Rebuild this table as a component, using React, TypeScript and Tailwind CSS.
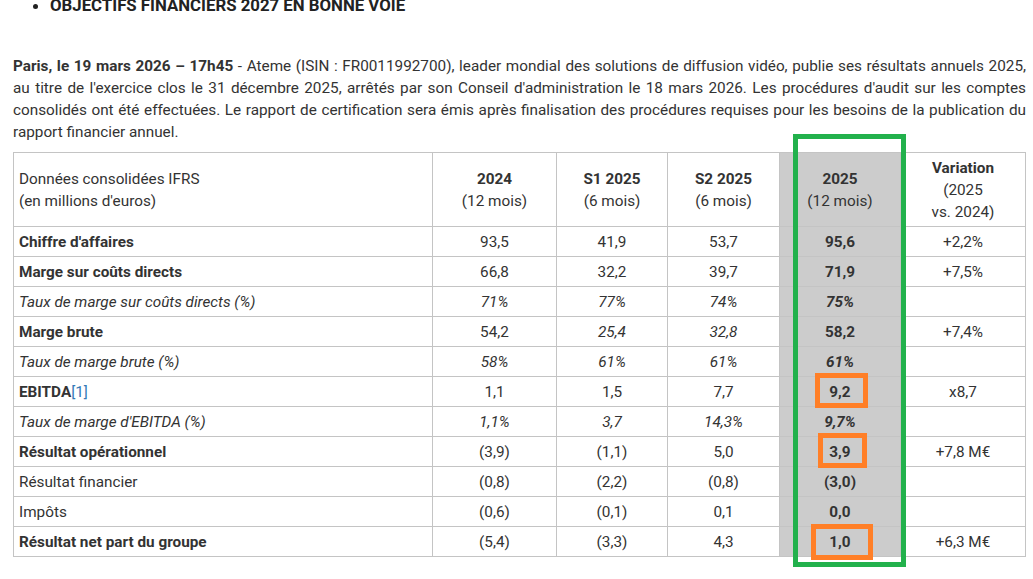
import React from "react";

type Cell = { v: string; i?: boolean };
type Row = {
  label: React.ReactNode;
  kind: "bold" | "italic" | "normal";
  vals: Cell[];
  v2025: Cell;
  variation: string;
};

const rows: Row[] = [
  { label: "Chiffre d'affaires", kind: "bold", vals: [{ v: "93,5" }, { v: "41,9" }, { v: "53,7" }], v2025: { v: "95,6" }, variation: "+2,2%" },
  { label: "Marge sur coûts directs", kind: "bold", vals: [{ v: "66,8" }, { v: "32,2" }, { v: "39,7" }], v2025: { v: "71,9" }, variation: "+7,5%" },
  { label: "Taux de marge sur coûts directs (%)", kind: "italic", vals: [{ v: "71%", i: true }, { v: "77%", i: true }, { v: "74%", i: true }], v2025: { v: "75%", i: true }, variation: "" },
  { label: "Marge brute", kind: "bold", vals: [{ v: "54,2" }, { v: "25,4", i: true }, { v: "32,8", i: true }], v2025: { v: "58,2" }, variation: "+7,4%" },
  { label: "Taux de marge brute (%)", kind: "italic", vals: [{ v: "58%", i: true }, { v: "61%", i: true }, { v: "61%", i: true }], v2025: { v: "61%", i: true }, variation: "" },
  {
    label: (
      <>
        <span className="font-bold">EBITDA</span>
        <span className="font-normal text-[#337ab7]">[1]</span>
      </>
    ),
    kind: "normal",
    vals: [{ v: "1,1" }, { v: "1,5" }, { v: "7,7" }],
    v2025: { v: "9,2" },
    variation: "x8,7",
  },
  { label: "Taux de marge d'EBITDA (%)", kind: "italic", vals: [{ v: "1,1%", i: true }, { v: "3,7", i: true }, { v: "14,3%", i: true }], v2025: { v: "9,7%", i: true }, variation: "" },
  { label: "Résultat opérationnel", kind: "bold", vals: [{ v: "(3,9)" }, { v: "(1,1)" }, { v: "5,0" }], v2025: { v: "3,9" }, variation: "+7,8 M€" },
  { label: "Résultat financier", kind: "normal", vals: [{ v: "(0,8)" }, { v: "(2,2)" }, { v: "(0,8)" }], v2025: { v: "(3,0)" }, variation: "" },
  { label: "Impôts", kind: "normal", vals: [{ v: "(0,6)" }, { v: "(0,1)" }, { v: "0,1" }], v2025: { v: "0,0" }, variation: "" },
  { label: "Résultat net part du groupe", kind: "bold", vals: [{ v: "(5,4)" }, { v: "(3,3)" }, { v: "4,3" }], v2025: { v: "1,0" }, variation: "+6,3 M€" },
];

const cellB = "border border-[#c4c4c4]";

export default function App() {
  return (
    <div className="relative w-[1033px] h-[579px] overflow-hidden bg-white text-[#333] [font-family:Roboto,'Noto_Sans',sans-serif]">
      <div className="pl-[13px] pr-[7px]">
        <ul className="list-disc pl-[37px] mt-[-6px] text-[16.8px] leading-[22px] font-bold text-[#222]">
          <li>OBJECTIFS FINANCIERS 2027 EN BONNE VOIE</li>
        </ul>
        <p className="mt-[39px] text-[15.3px] leading-[22px] text-justify">
          <span className="font-bold">Paris, le 19 mars 2026 – 17h45</span> - Ateme (ISIN : FR0011992700), leader mondial des solutions de diffusion vidéo, publie ses résultats annuels 2025, au titre de l'exercice clos le 31 décembre 2025, arrêtés par son Conseil d'administration le 18 mars 2026. Les procédures d'audit sur les comptes consolidés ont été effectuées. Le rapport de certification sera émis après finalisation des procédures requises pour les besoins de la publication du rapport financier annuel.
        </p>
        <table className="mt-[9px] table-fixed border-collapse w-[1012px] text-[15.3px] leading-[22px]">
          <colgroup>
            <col className="w-[419px]" />
            <col className="w-[124px]" />
            <col className="w-[111px]" />
            <col className="w-[112px]" />
            <col className="w-[121px]" />
            <col className="w-[125px]" />
          </colgroup>
          <thead>
            <tr className="h-[74px]">
              <td className={`${cellB} px-[5px] text-left font-normal`}>
                Données consolidées IFRS
                <br />
                (en millions d'euros)
              </td>
              <td className={`${cellB} text-center`}>
                <span className="font-bold">2024</span>
                <br />
                (12 mois)
              </td>
              <td className={`${cellB} text-center`}>
                <span className="font-bold">S1 2025</span>
                <br />
                (6 mois)
              </td>
              <td className={`${cellB} text-center`}>
                <span className="font-bold">S2 2025</span>
                <br />
                (6 mois)
              </td>
              <td className={`${cellB} text-center bg-[#cccccc]`}>
                <span className="font-bold">2025</span>
                <br />
                (12 mois)
              </td>
              <td className={`${cellB} text-center`}>
                <span className="font-bold">Variation</span>
                <br />
                (2025
                <br />
                vs. 2024)
              </td>
            </tr>
          </thead>
          <tbody>
            {rows.map((r, idx) => (
              <tr key={idx} className="h-[30px]">
                <td
                  className={`${cellB} px-[5px] text-left ${
                    r.kind === "bold" ? "font-bold" : r.kind === "italic" ? "italic" : ""
                  }`}
                >
                  {r.label}
                </td>
                {r.vals.map((c, j) => (
                  <td key={j} className={`${cellB} text-center ${c.i ? "italic" : ""}`}>
                    {c.v}
                  </td>
                ))}
                <td className={`${cellB} text-center bg-[#cccccc] font-bold ${r.v2025.i ? "italic" : ""}`}>
                  {r.v2025.v}
                </td>
                <td className={`${cellB} text-center`}>{r.variation}</td>
              </tr>
            ))}
          </tbody>
        </table>
      </div>

      <div className="absolute left-[793px] top-[134px] w-[113px] h-[433px] border-[5px] border-[#22b14c]" />
      <div className="absolute left-[815px] top-[373px] w-[53px] h-[35px] border-[5px] border-[#ff7f27]" />
      <div className="absolute left-[818px] top-[433px] w-[49px] h-[35px] border-[5px] border-[#ff7f27]" />
      <div className="absolute left-[811px] top-[524px] w-[62px] h-[36px] border-[5px] border-[#ff7f27]" />
    </div>
  );
}
